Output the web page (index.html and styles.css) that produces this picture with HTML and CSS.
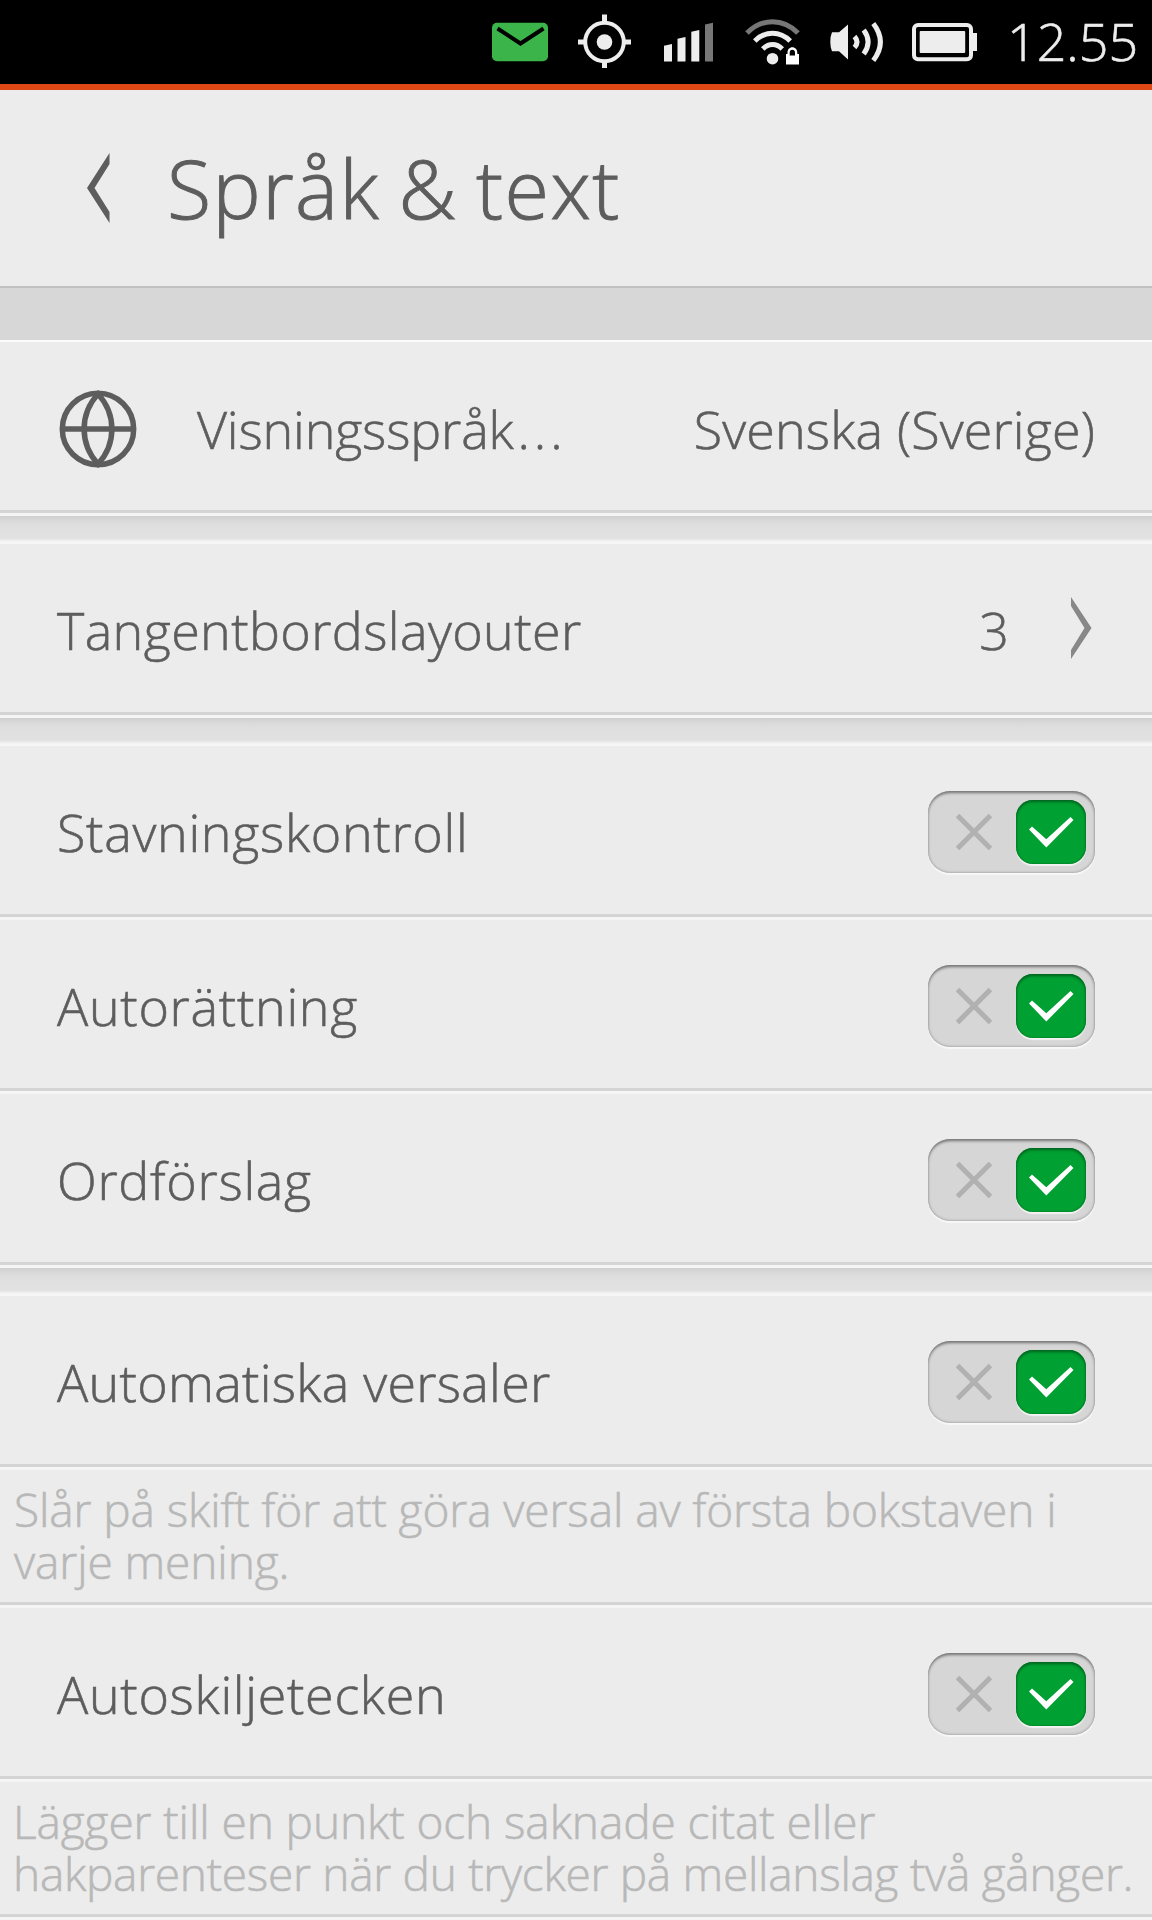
FILE: index.html
```html
<!DOCTYPE html>
<html lang="sv">
<head>
    <meta charset="UTF-8">
    <title>Språk &amp; text</title>
    <link rel="stylesheet" href="styles.css">
</head>
<body>
    <svg class="defs" width="0" height="0">
        <symbol id="cross" viewBox="0 0 36 36">
            <path d="M1.500 1.500L34.500 34.500M34.500 1.500L1.500 34.500" fill="none" stroke="#b1b1b1" stroke-width="5"/>
        </symbol>
        <symbol id="check" viewBox="0 0 45 31">
            <path d="M0 12.500L3 9.500L17.300 22.300L41.500 0L44.500 3L17.300 30.500Z" fill="#fff"/>
        </symbol>
    </svg>

    <div class="status-bar">
        <svg width="510" height="84" viewBox="480 0 510 84">
            <!-- mail -->
            <rect x="492" y="22.7" width="56" height="38.6" rx="5" fill="#3bb54a"/>
            <path d="M497.5 28.5L520.5 43.5L543.5 28.5" fill="none" stroke="#000" stroke-width="4"/>
            <!-- location -->
            <g fill="none" stroke="#ededed">
                <circle cx="604.5" cy="42" r="19.3" stroke-width="4"/>
                <path d="M604.5 14.5V23M604.5 61V68M578 42H586M623 42H631" stroke-width="5"/>
            </g>
            <circle cx="604.5" cy="42" r="7.8" fill="#ededed"/>
            <!-- signal -->
            <g fill="#ededed">
                <path d="M664 45.8L672 44V61.5H664Z"/>
                <path d="M677.5 38.8L685.5 37V61.5H677.5Z"/>
                <path d="M691.3 31.8L699.3 30V61.5H691.3Z"/>
                <path d="M705 24.5L713 22.8V61.5H705Z" fill="#777"/>
            </g>
            <!-- wifi -->
            <g fill="none" stroke="#ededed" stroke-width="5">
                <path d="M747 33Q758 21.7 772.5 21.7T798 33" stroke="#777"/>
                <path d="M754.8 41Q762.5 33.2 772.5 33.2T790.2 41"/>
                <path d="M762.8 49Q767 44.5 772.5 44.5T782.2 49"/>
            </g>
            <circle cx="772.5" cy="58.7" r="5.8" fill="#ededed"/>
            <path d="M786 64.5V54H787.5V52.5C787.5 49.5 789.5 47.2 792.3 47.2S797.3 49.5 797.3 52.5V54H799V64.5Z" fill="#fff"/>
            <path d="M789.7 55.5V52.8Q789.7 49.8 792.3 49.8T795 52.8V55.5Z" fill="#000"/>
            <!-- volume -->
            <path d="M832 32.3H839L848 24.5V59.5L839 51.3H832Q830.3 48 830.3 42T832 32.3Z" fill="#ededed"/>
            <g fill="none" stroke="#ededed" stroke-width="5">
                <path d="M854.5 36.5Q859.5 42 854.5 47.5"/>
                <path d="M863.7 30Q872.5 42 863.7 54"/>
                <path d="M873.3 23.5Q887.5 42 873.3 60.5"/>
            </g>
            <!-- battery -->
            <rect x="914" y="25" width="57" height="34.3" rx="4" fill="none" stroke="#ededed" stroke-width="4"/>
            <rect x="919.7" y="31" width="45.5" height="22" rx="1" fill="#ededed"/>
            <path d="M971 33H977V51H971Z" fill="#ededed"/>
        </svg>
        <span class="clock">12.55</span>
    </div>

    <div class="header">
        <svg class="back" width="23" height="70" viewBox="0 0 23 70">
            <path d="M22.5 0V11L7.5 35L22.5 59V70L0 35Z" fill="#5d5d5d"/>
        </svg>
        <h1>Språk &amp; text</h1>
    </div>
    <div class="spacer"></div>

    <div class="row language">
        <svg class="globe" width="78" height="78" viewBox="0 0 78 78">
            <circle cx="39" cy="39" r="35.7"/>
            <path d="M39 4C20.500 24 20.500 54 39 74C57.500 54 57.500 24 39 4ZM3 39H75"/>
        </svg>
        <span class="label">Visningsspråk<span class="dots">...</span></span>
        <span class="value">Svenska (Sverige)</span>
    </div>
    <div class="divider"></div>

    <div class="row layouts">
        <span class="label">Tangentbordslayouter</span>
        <span class="value">3</span>
        <svg class="next" width="21" height="62" viewBox="0 0 21 62">
            <path d="M0 0V9L13.500 31L0 53V62L20.500 31Z" fill="#888"/>
        </svg>
    </div>
    <div class="divider"></div>

    <div class="row">
        <span class="label">Stavningskontroll</span>
        <div class="switch">
            <svg width="36" height="36"><use href="#cross"/></svg>
            <div class="thumb"><svg width="45" height="31"><use href="#check"/></svg></div>
        </div>
    </div>
    <div class="row">
        <span class="label">Autorättning</span>
        <div class="switch">
            <svg width="36" height="36"><use href="#cross"/></svg>
            <div class="thumb"><svg width="45" height="31"><use href="#check"/></svg></div>
        </div>
    </div>
    <div class="row">
        <span class="label">Ordförslag</span>
        <div class="switch">
            <svg width="36" height="36"><use href="#cross"/></svg>
            <div class="thumb"><svg width="45" height="31"><use href="#check"/></svg></div>
        </div>
    </div>
    <div class="divider"></div>

    <div class="row capitals">
        <span class="label">Automatiska versaler</span>
        <div class="switch">
            <svg width="36" height="36"><use href="#cross"/></svg>
            <div class="thumb"><svg width="45" height="31"><use href="#check"/></svg></div>
        </div>
    </div>
    <p class="caption">Slår på skift för att göra versal av första bokstaven i<br>varje mening.</p>

    <div class="row">
        <span class="label">Autoskiljetecken</span>
        <div class="switch">
            <svg width="36" height="36"><use href="#cross"/></svg>
            <div class="thumb"><svg width="45" height="31"><use href="#check"/></svg></div>
        </div>
    </div>
    <p class="caption punctuation">Lägger till en punkt och saknade citat eller<br><span>hakparenteser när du trycker på mellanslag två gånger.</span></p>
</body>
</html>
```
FILE: styles.css
```css
* {
    margin: 0;
    padding: 0;
    box-sizing: border-box;
}

body {
    background: #ececec;
    color: #5d5d5d;
    font-family: "Open Sans", sans-serif;
    font-weight: 300;
    font-size: 52px;
    -webkit-text-stroke: 0.6px;
}

svg {
    display: block;
    flex-shrink: 0;
}

.defs {
    position: absolute;
}

.status-bar {
    height: 90px;
    display: flex;
    align-items: center;
    padding-left: 480px;
    background: #000;
    border-bottom: 6px solid #dd4814;
}

.clock {
    margin: -4px 0 0 17px;
    color: #ededed;
}

.header {
    height: 196px;
    display: flex;
    align-items: center;
    padding-left: 87px;
}

h1 {
    margin: -2px 0 0 57px;
    font-size: 81px;
    font-weight: 300;
    letter-spacing: 1.4px;
    word-spacing: -4px;
    -webkit-text-stroke: 1px;
}

.spacer {
    height: 56px;
    background: #d7d7d7;
    border-top: 2px solid #c0c0c0;
    border-bottom: 2px solid #fcfcfc;
}

.row {
    height: 174px;
    display: flex;
    align-items: center;
    justify-content: space-between;
    padding: 3px 57px 3px 57px;
}

/* engraved line below each item */
.row,
.caption {
    border-bottom: 3px solid #f5f5f5;
    box-shadow: inset 0 -3px #d4d4d4;
}

.label {
    letter-spacing: 0.7px;
    white-space: nowrap;
}

.language {
    padding: 5px 56px 3px 59px;
}

.language .label {
    margin: 0 auto 0 60px;
    letter-spacing: -0.15px;
}

.dots {
    margin-left: 4px;
    letter-spacing: 3.9px;
}

.language .value {
    margin-right: 1px;
    letter-spacing: 0.16px;
}

.globe {
    fill: none;
    stroke: #5d5d5d;
    stroke-width: 5.5;
}

.layouts .label {
    letter-spacing: 0.4px;
}

.layouts .value {
    margin-left: auto;
}

.next {
    margin: -4px 3px 0 62px;
}

.capitals .label {
    letter-spacing: 0.28px;
}

.divider {
    height: 28px;
    background: linear-gradient(#cfcfcf, #dadada 5px, #dfdfdf 10px, #e1e1e1 22px, #f6f6f6 26px, #f6f6f6);
}

.switch {
    width: 167px;
    height: 82px;
    display: flex;
    align-items: center;
    justify-content: space-between;
    padding: 0 9px 0 28px;
    border-radius: 22px;
    background: #d6d6d6;
    box-shadow: inset 0 3px 3px -1px #777, inset 0 0 3px #888, 0 2px 1px #f8f8f8;
}

.thumb {
    width: 70px;
    height: 64px;
    display: flex;
    align-items: center;
    justify-content: center;
    padding-top: 2px;
    border-radius: 17px;
    background: #00a132;
    box-shadow: inset 0 2px 3px #00651f, inset 0 0 2px #00651f, 0 2px 1px #f2f2f2;
}

.caption {
    height: 138px;
    padding: 13px 0 0 14px;
    font-size: 46px;
    line-height: 52px;
    letter-spacing: -0.08px;
    color: #b8b8b8;
    white-space: nowrap;
}

.punctuation {
    padding-left: 13px;
}

.punctuation span {
    letter-spacing: -0.27px;
}
```
